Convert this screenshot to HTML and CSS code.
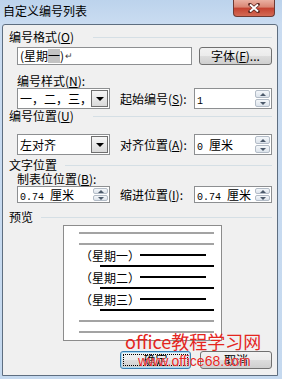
FILE: index.html
```html
<!DOCTYPE html>
<html lang="zh-CN">
<head>
  <meta charset="UTF-8">
  <title>自定义编号列表</title>
  <link rel="stylesheet" href="styles.css">
</head>
<body>

  <div class="window">
    <div class="titlebar">
      <span class="title">自定义编号列表</span>
      <span class="close">
        <svg width="12" height="10" viewBox="0 0 12 10">
          <path d="M2 1.5 L10 8.5 M10 1.5 L2 8.5" stroke="#5a2620" stroke-width="3.6" stroke-linecap="round"/>
          <path d="M2 1.5 L10 8.5 M10 1.5 L2 8.5" stroke="#fff" stroke-width="2"/>
        </svg>
      </span>
    </div>

    <div class="client">
      <div class="group-head head-wide"><span class="name">编号格式(<u>O</u>)</span><i class="rule"></i></div>
      <div class="row format-row">
        <div class="field format-field">(星期<span class="sel">一</span>)<span class="ret">↵</span></div>
        <button class="btn font-btn">字体(<u>F</u>)...</button>
      </div>

      <div class="label">编号样式(<u>N</u>):</div>
      <div class="row pick-row">
        <div class="field combo"><span class="combo-text">一，二，三，四，…</span><span class="combo-arrow"></span></div>
        <span class="inline-label">起始编号(<u>S</u>):</span>
        <div class="field spin"><span class="spin-text"><span class="num">1</span></span><span class="spin-btns"><i class="up"></i><i class="down"></i></span></div>
      </div>

      <div class="group-head head-wide"><span class="name">编号位置(<u>U</u>)</span><i class="rule"></i></div>
      <div class="row pick-row align-row">
        <div class="field combo"><span class="combo-text">左对齐</span><span class="combo-arrow"></span></div>
        <span class="inline-label">对齐位置(<u>A</u>):</span>
        <div class="field spin"><span class="spin-text"><span class="num">0 </span>厘米</span><span class="spin-btns"><i class="up"></i><i class="down"></i></span></div>
      </div>

      <div class="group-head head-text"><span class="name">文字位置</span><i class="rule"></i></div>
      <div class="label label-tight">制表位位置(<u>B</u>):</div>
      <div class="row pick-row short-row">
        <div class="field spin left-spin"><span class="spin-text"><span class="num">0.74 </span>厘米</span><span class="spin-btns"><i class="up"></i><i class="down"></i></span></div>
        <span class="inline-label">缩进位置(<u>I</u>):</span>
        <div class="field spin"><span class="spin-text"><span class="num">0.74 </span>厘米</span><span class="spin-btns"><i class="up"></i><i class="down"></i></span></div>
      </div>

      <div class="group-head head-preview"><span class="name">预览</span><i class="rule"></i></div>
      <div class="preview">
        <div class="pv pv-grey"><i class="line"></i></div>
        <div class="pv pv-grey"><i class="line"></i></div>
        <div class="pv pv-text"><span>（星期一）</span><i class="line"></i></div>
        <div class="pv pv-black"><i class="line"></i></div>
        <div class="pv pv-text"><span>（星期二）</span><i class="line"></i></div>
        <div class="pv pv-black"><i class="line"></i></div>
        <div class="pv pv-text"><span>（星期三）</span><i class="line"></i></div>
        <div class="pv pv-black"><i class="line"></i></div>
        <div class="pv pv-grey"><i class="line"></i></div>
        <div class="pv pv-grey"><i class="line"></i></div>
      </div>

      <div class="row button-row">
        <button class="btn btn-default">确定</button>
        <button class="btn">取消</button>
      </div>
    </div>

    <div class="watermark">
      <div class="wm-title">office教程学习网</div>
      <div class="wm-url">www.office68.com</div>
    </div>
  </div>

</body>
</html>
```

FILE: styles.css
```css
* { box-sizing: border-box; }
body { margin: 0; font: 12px "Noto Sans CJK SC", sans-serif; color: #000; background: #c4d8ef; }
u { text-decoration: underline; text-underline-offset: 1px; }

.window { position: relative; width: 282px; height: 379px; overflow: hidden; background: linear-gradient(#bcd3ec, #cadcf1 24px, #c5d9ef); }
.titlebar { height: 24px; display: flex; align-items: flex-start; padding-left: 3px; }
.title { margin-top: 4px; line-height: 14px; }
.close { margin: 0 7px 0 auto; width: 42px; height: 17px; display: flex; align-items: center; justify-content: center; border: 1px solid #6e3a33; border-top: 0; border-radius: 0 0 4px 4px; background: linear-gradient(#eab0a2, #d98573 45%, #c4412f 50%, #d36a55); }

.client { margin-left: 2px; width: 276px; height: 352px; padding: 5px 5px 0 6px; border: 1px solid #5e6e80; border-radius: 3px 3px 0 0; background: #f0f0f0; }

.group-head { display: flex; align-items: center; height: 14px; line-height: 14px; }
.group-head .rule { flex: 1; margin-left: 8px; border-top: 1px solid #d5dfe5; }
.head-wide .name { width: 76px; }
.head-text { margin-top: 3px; }
.head-preview { margin-top: 7px; }

.row { display: flex; align-items: center; }
.label { margin: 9px 0 0 8px; height: 14px; line-height: 14px; }
.label-tight { margin-top: 0; }

.field { display: flex; align-items: center; background: #fff; border: 1px solid #8d8f91; }
.format-row { height: 18px; margin: 3px 0 0 8px; }
.format-field { width: 175px; height: 18px; padding-left: 2px; line-height: 14px; }
.format-field .sel { background: #c3c3c3; }
.format-field .ret { font-size: 9px; color: #404040; margin-left: 1px; }

.btn { height: 18px; padding: 0; font: inherit; color: #000; line-height: 14px; border: 1px solid #707070; border-radius: 3px; background: linear-gradient(#f2f2f2, #ebebeb 50%, #dddddd 50%, #cfcfcf); }
.font-btn { width: 73px; margin-left: 7px; }

.pick-row { height: 21px; margin-left: 8px; }
.align-row { margin-top: 11px; }
.short-row { height: 17px; }
.combo { width: 93px; height: 21px; padding-left: 2px; }
.combo-text { flex: 1; overflow: hidden; white-space: nowrap; line-height: 17px; }
.combo-arrow { width: 17px; height: 17px; margin-right: 1px; border: 1px solid #6f6f6f; background: linear-gradient(#f6f6f6, #dadada); display: flex; align-items: center; justify-content: center; }
.combo-arrow::after { content: ""; border-left: 4px solid transparent; border-right: 4px solid transparent; border-top: 4px solid #000; }

.inline-label { width: 74px; margin-left: 10px; line-height: 16px; white-space: nowrap; }
.spin { width: 78px; height: 100%; padding-left: 2px; }
.left-spin { width: 93px; }
.spin-text { flex: 1; line-height: 15px; white-space: nowrap; overflow: hidden; }
.num { font: 10px "Liberation Mono", monospace; white-space: pre; }
.spin-btns { width: 15px; height: calc(100% - 2px); margin-right: 1px; display: flex; flex-direction: column; gap: 1px; }
.spin-btns i { flex: 1; display: flex; align-items: center; justify-content: center; border: 1px solid #b3bcc7; border-radius: 2px; background: linear-gradient(#f4f7fa, #dce3eb); }
.spin-btns .up::after { content: ""; border-left: 3px solid transparent; border-right: 3px solid transparent; border-bottom: 3px solid #4c5a6b; }
.spin-btns .down::after { content: ""; border-left: 3px solid transparent; border-right: 3px solid transparent; border-top: 3px solid #4c5a6b; }

.preview { width: 159px; height: 116px; margin: 1px 0 0 54px; padding: 2px 0; border: 1px solid #8c8c8c; background: #fff; }
.pv { display: flex; align-items: flex-start; height: 11px; }
.pv .line { display: block; height: 2px; margin-top: 4px; }
.pv-grey .line { width: 135px; margin-left: 15px; background: #a3a3a3; }
.pv-black .line { width: 114px; margin-left: 36px; background: #000; }
.pv-text span { width: 60px; margin-left: 16px; line-height: 11px; white-space: nowrap; }
.pv-text .line { width: 66px; background: #000; }

.button-row { justify-content: flex-end; gap: 9px; height: 18px; margin-top: 10px; }
.button-row .btn { width: 72px; }
.btn-default { position: relative; width: 71px !important; border-color: #3c7fb1; box-shadow: inset 0 0 0 1px #a8dcf6; }
.btn-default::after { content: ""; position: absolute; inset: 2px; border: 1px dotted #000; border-radius: 1px; }

.watermark { position: absolute; left: 125px; top: 331px; color: #e4261f; pointer-events: none; }
.wm-title { font: 18px/20px "Noto Sans CJK SC", sans-serif; white-space: nowrap; }
.wm-url { margin: 3px 0 0 13px; font: 14px/14px "Liberation Sans", Arial, sans-serif; white-space: nowrap; text-shadow: 0 0 1px #fff; }
```
